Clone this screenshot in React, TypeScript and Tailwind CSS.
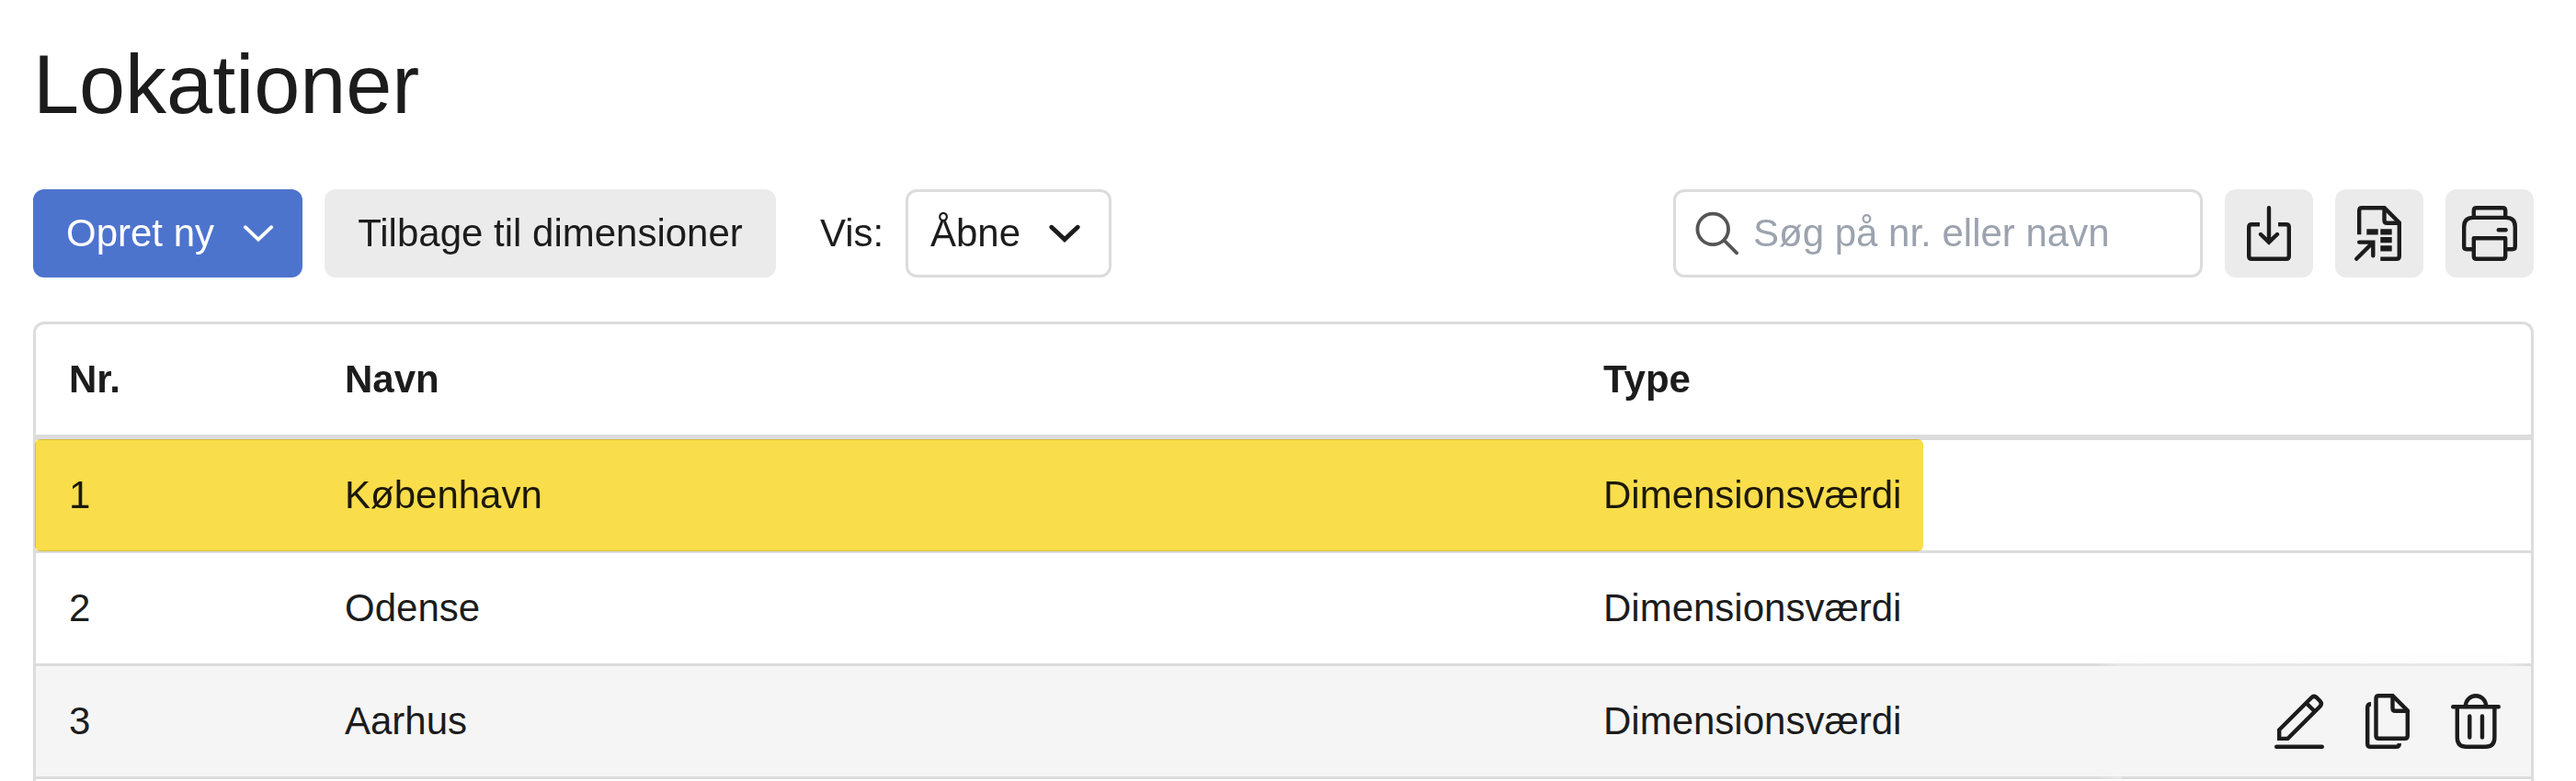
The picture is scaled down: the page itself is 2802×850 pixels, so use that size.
import React from "react";

type Row = { nr: string; name: string; type: string; marked?: boolean; active?: boolean };

const rows: Row[] = [
  { nr: "1", name: "København", type: "Dimensionsværdi", marked: true },
  { nr: "2", name: "Odense", type: "Dimensionsværdi" },
  { nr: "3", name: "Aarhus", type: "Dimensionsværdi", active: true },
];

function Icon({ children }: { children: React.ReactNode }) {
  return (
    <svg viewBox="0 0 96 96" className="size-24" fill="none" stroke="#1c1c1c" strokeWidth="4.4">
      {children}
    </svg>
  );
}

function ChevronIcon({ weight }: { weight: number }) {
  return (
    <svg viewBox="0 0 36 20" className="h-5 w-9 shrink-0" fill="none" stroke="currentColor" strokeWidth={weight} strokeLinecap="round">
      <path d="M3.8 3.2 18 16.6 32.2 3.2" />
    </svg>
  );
}

function SearchIcon() {
  return (
    <svg viewBox="0 0 48 48" className="size-12 shrink-0" fill="none" stroke="#555555" strokeWidth="3.8" strokeLinecap="round">
      <circle cx="19.2" cy="19.4" r="16.8" />
      <path d="M31.3 31.5 45.1 45.3" />
    </svg>
  );
}

function DownloadIcon() {
  return (
    <Icon>
      <path d="M38 38.2H29.2Q26.2 38.2 26.2 41.2V72.8Q26.2 75.8 29.2 75.8H66.8Q69.8 75.8 69.8 72.8V41.2Q69.8 38.2 66.8 38.2H58" />
      <path d="M48 20.2V57M39 49 48 57.6 57 49" strokeLinecap="round" />
    </Icon>
  );
}

function ExportIcon() {
  return (
    <Icon>
      <path d="M26.2 49.3V23.2Q26.2 20.2 29.2 20.2H53.6L69.8 36.4V72.8Q69.8 75.8 66.8 75.8H49.3" />
      <path d="M53.5 20.2V33.8Q53.5 36.8 56.5 36.8H69.8" />
      <path d="M23.2 75.8 41 58M26.2 57.6H41.3V72.2" strokeLinecap="round" />
      <path d="M34.3 46.3H46.7M49.3 46.3H61.7M49.3 55.2H61.7M49.3 64.3H61.7" strokeWidth="6.2" />
    </Icon>
  );
}

function PrintIcon() {
  return (
    <Icon>
      <path d="M30.8 31V23.2Q30.8 20.2 33.8 20.2H62.2Q65.2 20.2 65.2 23.2V31" />
      <path d="M30.8 65.2H23.2Q20.2 65.2 20.2 62.2V40.9Q20.2 30.9 30.2 30.9H65.8Q75.8 30.9 75.8 40.9V62.2Q75.8 65.2 72.8 65.2H65.2" />
      <path d="M30.8 53.2H65.2V72.8Q65.2 75.8 62.2 75.8H33.8Q30.8 75.8 30.8 72.8Z" strokeLinejoin="round" />
      <path d="M57.8 44.2H65.6" strokeLinecap="round" />
    </Icon>
  );
}

function EditIcon() {
  return (
    <Icon>
      <path d="M26.2 66.9V57.3L61.3 22.2Q64 19.6 66.8 22.2L70.6 26Q73.2 28.9 70.6 31.8L35.5 66.9Z" />
      <path d="M55.7 28.2 65 37.5" />
      <path d="M23.2 75.7H72.8" strokeLinecap="round" />
    </Icon>
  );
}

function CopyIcon() {
  return (
    <Icon>
      <path d="M35.5 23.2Q35.5 20.2 38.5 20.2H53.6L69.8 36.4V63.8Q69.8 66.8 66.8 66.8H38.5Q35.5 66.8 35.5 63.8Z" />
      <path d="M53.5 20.2V33.8Q53.5 36.8 56.5 36.8H69.8" />
      <path d="M30 29.3Q26.2 29.3 26.2 33V72.4Q26.2 75.8 29.6 75.8H57.5Q60.8 75.8 60.8 72" />
    </Icon>
  );
}

function TrashIcon() {
  return (
    <Icon>
      <path d="M36.9 32.3V31.3A11.1 11.1 0 0 1 59.1 31.3V32.3" />
      <path d="M27.8 32.3V65.8Q27.8 75.8 37.8 75.8H58.4Q68.4 75.8 68.4 65.8V32.3" />
      <path d="M23.2 32.3H72.8M41.3 42.5V65.5M55 42.5V65.5" strokeLinecap="round" />
    </Icon>
  );
}

function ToolButton({ label, children }: { label: string; children: React.ReactNode }) {
  return (
    <button aria-label={label} className="size-24 rounded-xl bg-[#ebebeb]">
      {children}
    </button>
  );
}

const columns = "grid grid-cols-[300px_1369px_1fr_auto] items-center";

export default function App() {
  return (
    <main className="h-[850px] overflow-hidden bg-white px-9 font-['Liberation_Sans',Arial,sans-serif] text-[42px] leading-[48px] text-[#1c1c1c]">
      <h1 className="pt-[38px] text-[90px] leading-[108px]">Lokationer</h1>

      <div className="mt-[60px] flex h-24 w-[2720px] items-center justify-between">
        <div className="flex items-center">
          <button className="flex h-24 w-[293px] items-center justify-between rounded-xl bg-[#4d74cd] pr-[30px] pl-9 text-white">
            Opret ny
            <ChevronIcon weight={3.8} />
          </button>
          <button className="ml-6 h-24 w-[491px] rounded-xl bg-[#ebebeb] whitespace-nowrap">Tilbage til dimensioner</button>
          <span className="ml-12 w-[93px]">Vis:</span>
          <button className="flex h-24 w-[224px] items-center justify-between rounded-xl border-3 border-[#dcdcdc] pr-[30px] pl-6">
            Åbne
            <ChevronIcon weight={4.8} />
          </button>
        </div>
        <div className="flex items-center gap-6">
          <label className="flex h-24 w-[576px] items-center gap-[15px] rounded-xl border-3 border-[#dcdcdc] pl-[21px]">
            <SearchIcon />
            <input className="min-w-0 flex-1 outline-none placeholder:text-[#9ca3af]" placeholder="Søg på nr. eller navn" />
          </label>
          <ToolButton label="Download">
            <DownloadIcon />
          </ToolButton>
          <ToolButton label="Eksporter">
            <ExportIcon />
          </ToolButton>
          <ToolButton label="Udskriv">
            <PrintIcon />
          </ToolButton>
        </div>
      </div>

      <div className="mt-12 h-[520px] w-[2720px] rounded-t-xl border-3 border-b-0 border-[#dcdcdc]">
        <div className={`${columns} h-[126px] border-b-6 border-[#dcdcdc] pl-9 font-bold`}>
          <div>Nr.</div>
          <div>Navn</div>
          <div>Type</div>
        </div>
        {rows.map((row) => (
          <div
            key={row.nr}
            className={`${columns} relative h-[123px] border-b-3 border-[#dcdcdc] pl-9 ${row.active ? "bg-[#f5f5f5]" : "bg-white"}`}
          >
            <div>{row.nr}</div>
            <div>{row.name}</div>
            <div>{row.type}</div>
            {row.active && (
              <div className="flex pr-3">
                <EditIcon />
                <CopyIcon />
                <TrashIcon />
                {/* Soft edge of the action panel over the neighbouring borders */}
                <div className="absolute -top-[15px] right-6 h-3 w-[430px] bg-linear-to-b from-white to-[#fcfcfc]" />
                <div className="absolute -top-[3px] right-0 h-[3px] w-[473px] bg-[linear-gradient(90deg,#dcdcdc,#e8e8e8_6%,#e8e8e8_94%,#dcdcdc)]" />
                <div className="absolute right-[445px] -bottom-[3px] h-[3px] w-7 bg-linear-to-r from-[#dcdcdc] to-[#e8e8e8]" />
              </div>
            )}
            {row.marked && (
              <div className="absolute -top-px -left-px h-[122px] w-[2054px] rounded-md bg-[#f9dd4a] mix-blend-multiply" />
            )}
          </div>
        ))}
      </div>
    </main>
  );
}
